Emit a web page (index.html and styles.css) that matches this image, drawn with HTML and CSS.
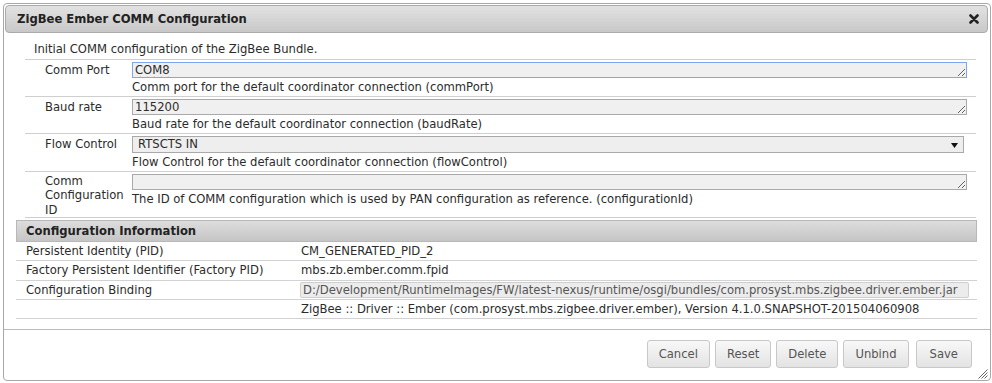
FILE: index.html
```html
<!DOCTYPE html>
<html>
<head>
<meta charset="utf-8">
<link rel="stylesheet" href="styles.css">
</head>
<body>
<div class="dialog">
  <div class="titlebar">
    <span class="title">ZigBee Ember COMM Configuration</span>
    <span class="close"><svg width="10" height="10" viewBox="0 0 10 10"><path d="M1.5 1.5 L8.5 8.5 M8.5 1.5 L1.5 8.5" stroke="#222" stroke-width="2.6" stroke-linecap="round"/></svg></span>
  </div>
  <div class="content">
    <div class="form">
      <div class="intro">Initial COMM configuration of the ZigBee Bundle.</div>
      <div class="row">
        <div class="label">Comm Port</div>
        <div class="field">
          <textarea class="input focused" rows="1">COM8</textarea>
          <div class="desc">Comm port for the default coordinator connection (commPort)</div>
        </div>
      </div>
      <div class="row">
        <div class="label">Baud rate</div>
        <div class="field">
          <textarea class="input" rows="1">115200</textarea>
          <div class="desc">Baud rate for the default coordinator connection (baudRate)</div>
        </div>
      </div>
      <div class="row">
        <div class="label">Flow Control</div>
        <div class="field">
          <div class="select-wrap">
            <select class="select"><option>RTSCTS IN</option></select>
            <svg class="arrow" width="7" height="5" viewBox="0 0 7 5"><polygon points="0,0 7,0 3.5,5" fill="#111"/></svg>
          </div>
          <div class="desc">Flow Control for the default coordinator connection (flowControl)</div>
        </div>
      </div>
      <div class="row">
        <div class="label tall">Comm Configuration ID</div>
        <div class="field">
          <textarea class="input" rows="1"></textarea>
          <div class="desc">The ID of COMM configuration which is used by PAN configuration as reference. (configurationId)</div>
        </div>
      </div>
    </div>
    <div class="info">
      <div class="info-head">Configuration Information</div>
      <div class="info-row"><div class="info-label">Persistent Identity (PID)</div><div class="info-value">CM_GENERATED_PID_2</div></div>
      <div class="info-row"><div class="info-label">Factory Persistent Identifier (Factory PID)</div><div class="info-value">mbs.zb.ember.comm.fpid</div></div>
      <div class="info-row"><div class="info-label">Configuration Binding</div><div class="info-value"><div class="binding">D:/Development/RuntimeImages/FW/latest-nexus/runtime/osgi/bundles/com.prosyst.mbs.zigbee.driver.ember.jar</div></div></div>
      <div class="info-row"><div class="info-label"></div><div class="info-value">ZigBee :: Driver :: Ember (com.prosyst.mbs.zigbee.driver.ember), Version 4.1.0.SNAPSHOT-201504060908</div></div>
    </div>
  </div>
  <div class="buttons">
    <button class="btn">Cancel</button>
    <button class="btn">Reset</button>
    <button class="btn">Delete</button>
    <button class="btn">Unbind</button>
    <button class="btn save">Save</button>
  </div>
  <svg class="grip" width="11" height="11" viewBox="0 0 11 11"><path d="M10.5 1.5 L1.5 10.5 M10.5 4.5 L4.5 10.5 M10.5 7.5 L7.5 10.5" stroke="#666" stroke-width="1"/></svg>
</div>
</body>
</html>
```
FILE: styles.css
```css
html, body {
  margin: 0;
  padding: 0;
  background: #fff;
}
body {
  font-family: "DejaVu Sans", Verdana, sans-serif;
  font-size: 11.6px;
  color: #2b2b2b;
}
.dialog {
  position: relative;
  margin: 3px;
  width: 986px;
  height: 376px;
  border: 1px solid #a8a8a8;
  border-radius: 4px;
  display: flex;
  flex-direction: column;
  background: #fff;
}
.titlebar {
  margin: 1px 2px 0 1px;
  height: 26px;
  border: 1px solid #aaa;
  border-radius: 4px;
  background: linear-gradient(#e2e2e2, #c8c8c8);
  display: flex;
  align-items: center;
  justify-content: space-between;
  padding: 0 8px 0 11px;
  flex: none;
}
.title {
  font-weight: bold;
  font-size: 11.6px;
  color: #222;
}
.close {
  display: flex;
  width: 10px;
  height: 10px;
}
.content {
  flex: 1;
  padding: 0 13px 0 12px;
}
.form {
  margin: 0 1px 0 9px;
}
.intro {
  padding: 8px 0 1px 9px;
  line-height: 17px;
  border-bottom: 1px solid #cfcfcf;
}
.row {
  display: flex;
  border-bottom: 1px solid #cfcfcf;
  padding: 2px 0 0 0;
}
.label {
  width: 87px;
  padding: 1px 0 0 20px;
  line-height: 14px;
  flex: none;
}
.label.tall {
  padding-top: 0;
  line-height: 14.3px;
}
.field {
  flex: 1;
  margin-right: 9px;
  min-width: 0;
}
.input {
  display: block;
  box-sizing: border-box;
  width: 100%;
  height: 16px;
  margin: 0;
  padding: 0 2px;
  font: inherit;
  line-height: 14px;
  color: #2b2b2b;
  background: #f0f0f0;
  border: 1px solid #a9a9a9;
  border-radius: 0;
  overflow: hidden;
  resize: both;
  outline: none;
}
.input.focused {
  border-color: #7ea6ec;
  text-decoration: underline wavy #e03030;
  text-decoration-thickness: 1px;
  text-underline-offset: 2px;
}
.desc {
  margin-top: 1px;
  line-height: 17px;
  white-space: nowrap;
}
.select-wrap {
  position: relative;
  width: calc(100% - 3px);
}
.select {
  display: block;
  box-sizing: border-box;
  width: 100%;
  height: 17px;
  margin: 0;
  padding: 0 0 0 5px;
  font: inherit;
  line-height: 15px;
  color: #2b2b2b;
  background: #eee;
  border: 1px solid #a9a9a9;
  border-radius: 0;
  appearance: none;
  -webkit-appearance: none;
  outline: none;
}
.arrow {
  position: absolute;
  right: 6px;
  top: 7px;
}
.info {
  margin-top: 2px;
}
.info-head {
  height: 20px;
  line-height: 20px;
  border: 1px solid #b8b8b8;
  background: linear-gradient(#dddddd, #c5c5c5);
  padding-left: 9px;
  font-weight: bold;
  font-size: 11.6px;
  color: #222;
}
.info-row {
  display: flex;
  height: 18px;
  line-height: 18px;
  border-bottom: 1px solid #d2d2d2;
}
.info-row:nth-child(3) {
  height: 19px;
}
.info-label {
  width: 274px;
  padding-left: 10px;
  flex: none;
  white-space: nowrap;
}
.info-value {
  flex: 1;
  min-width: 0;
  padding-left: 1px;
  margin-right: 8px;
  white-space: nowrap;
}
.binding {
  box-sizing: border-box;
  margin: 1px 0 0 -1px;
  height: 16px;
  line-height: 14px;
  padding: 0 2px;
  background: #ececec;
  border: 1px solid #cfcfcf;
  border-radius: 2px;
  color: #555;
  overflow: hidden;
  white-space: nowrap;
}
.buttons {
  flex: none;
  border-top: 1px solid #bbb;
  padding: 10px 18px 12px 0;
  display: flex;
  justify-content: flex-end;
  gap: 5px;
}
.btn {
  height: 28px;
  margin: 0;
  padding: 0 11px;
  font: inherit;
  color: #555;
  background: linear-gradient(#f8f8f8, #e3e3e3);
  border: 1px solid #c8c8c8;
  border-radius: 3px;
}
.btn.save {
  margin-left: 2px;
  padding: 0 13px;
}
.grip {
  position: absolute;
  right: 2px;
  bottom: 1px;
}
```
